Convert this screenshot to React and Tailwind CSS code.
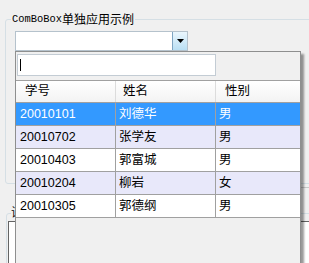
import React from "react";

const rows = [
  { id: "20010101", name: "刘德华", sex: "男" },
  { id: "20010702", name: "张学友", sex: "男" },
  { id: "20010403", name: "郭富城", sex: "男" },
  { id: "20010204", name: "柳岩", sex: "女" },
  { id: "20010305", name: "郭德纲", sex: "男" },
];

const font = { fontFamily: '"Liberation Sans", "Noto Sans CJK SC", sans-serif' };

const App = () => {
  return (
    <div
      className="relative w-[309px] h-[263px] overflow-hidden bg-[#f0f0f0] text-[12.5px] text-black"
      style={font}
    >
      {/* group box 1 */}
      <div className="relative mt-[19px] ml-[5px] w-[320px] h-[165px] border border-[#d5dfe5] rounded-[3px]">
        <div className="absolute left-[5px] -top-[10px] bg-[#f0f0f0] px-[1px] leading-[18px] flex items-center">
          <span className="text-[10.4px] font-['Liberation_Mono',monospace]">ComBoBox</span>
          <span className="text-[12px] font-['Noto_Sans_CJK_SC',sans-serif]">单独应用示例</span>
        </div>
        <div className="ml-[9px] mt-[11px] w-[173px] h-[20px] flex border border-[#b5c2cc] bg-white">
          <div className="flex-1"></div>
          <div className="w-[15px] h-full flex items-center justify-center border-l border-[#7fa5c2] bg-gradient-to-b from-[#eaf6fd] to-[#b9dff4]">
            <svg width="7" height="4" viewBox="0 0 7 4">
              <path d="M0 0 H7 L3.5 4 Z" fill="#000" />
            </svg>
          </div>
        </div>
        <div className="absolute right-[11px] top-[136px] w-[12px] h-[32px] border-b border-[#c8c8c8]"></div>
      </div>

      {/* group box 2 */}
      <div className="relative mt-[29px] ml-[6px] w-[320px] h-[80px] border border-[#d5dfe5] rounded-[3px]">
        <div className="absolute left-[4px] -top-[9px] w-[5px] overflow-hidden bg-[#f0f0f0] text-[12px] leading-[16px] whitespace-nowrap">
          试
        </div>
        <div className="ml-[1px] mt-[7px] h-[60px] border border-[#646464] bg-white"></div>
      </div>

      {/* popup */}
      <div className="absolute left-[15px] top-[51px] w-[286px] h-[230px] border border-[#8e8f8f] bg-[#f0f0f0] shadow-[3px_3px_2px_rgba(0,0,0,0.4)]">
        <div className="relative ml-[1px] mt-[2px] w-[199px] h-[22px] border border-[#c3ccd4] bg-white">
          <div className="absolute left-[2px] top-[4px] w-[1px] h-[12px] bg-black"></div>
        </div>
        <div className="mt-[4px] border-t border-[#a0a0a0]">
          <div className="flex h-[22px] border-b border-[#a0a0a0] bg-gradient-to-b from-white to-[#f3f3f3]">
            <div className="w-[100px] pl-[9px] flex items-center border-r border-[#dcdcdc]">学号</div>
            <div className="w-[100px] pl-[7px] flex items-center border-r border-[#dcdcdc]">姓名</div>
            <div className="flex-1 pl-[9px] flex items-center">性别</div>
          </div>
          {rows.map((r, i) => (
            <div
              key={r.id}
              className={
                i === 0
                  ? "flex h-[23px] border-b border-[#a0a0a0] bg-[#3399ff] text-white"
                  : i % 2 === 1
                  ? "flex h-[23px] border-b border-[#a0a0a0] bg-[#e8e8fa]"
                  : "flex h-[23px] border-b border-[#a0a0a0] bg-white"
              }
            >
              <div className="w-[100px] pl-[4px] flex items-center border-r border-[#a0a0a0]">{r.id}</div>
              <div className="w-[100px] pl-[3px] flex items-center border-r border-[#a0a0a0]">{r.name}</div>
              <div className="flex-1 pl-[3px] flex items-center">{r.sex}</div>
            </div>
          ))}
        </div>
      </div>
    </div>
  );
};

export default App;
